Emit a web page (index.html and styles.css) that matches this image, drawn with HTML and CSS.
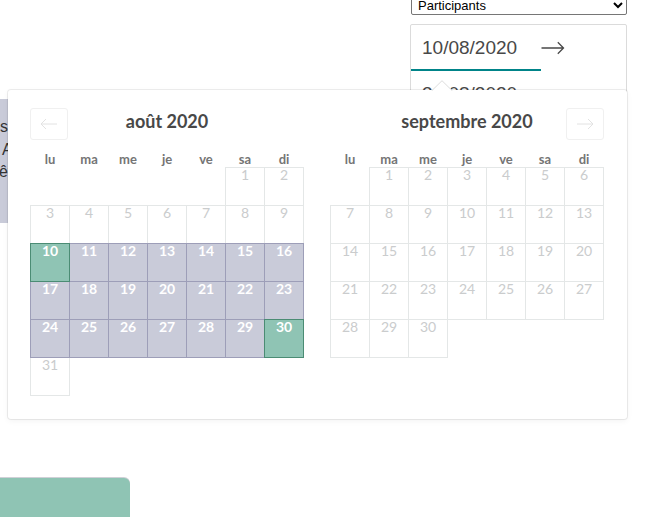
FILE: index.html
```html
<!DOCTYPE html>
<html lang="fr">
<head>
<meta charset="utf-8">
<title>Dates</title>
<link rel="stylesheet" href="styles.css">
</head>
<body>
<div class="page">
  <div class="left">
    <div class="panel">
      <div class="pl l1">s</div>
      <div class="pl l2">A</div>
      <div class="pl l3">êt</div>
    </div>
    <div class="cta"></div>
  </div>
  <div class="right">
    <select class="participants"><option>Participants</option></select>
    <div class="dates">
      <div class="date-input active">10/08/2020</div>
      <svg class="range-arrow" width="24" height="24" viewBox="0 0 24 24"><path d="M0.5 12H22.5M16.8 6.3L22.5 12L16.8 17.7" fill="none" stroke="#484848" stroke-width="1.3"/></svg>
      <div class="date-input">30/08/2020</div>
    </div>
  </div>

  <svg class="fang" width="22" height="11" viewBox="0 0 22 11"><path d="M0 11L11 0.5L22 11Z" fill="#fff"/><path d="M0.5 11L11 0.7L21.5 11" fill="none" stroke="#dcdcdc" stroke-width="1"/></svg>

  <div class="picker">
    <div class="month">
      <div class="month-head">
        <div class="nav"><svg width="18" height="12" viewBox="0 0 18 12"><path d="M1 6H17M6 1L1 6L6 11" fill="none" stroke="#e2e2e2" stroke-width="1"/></svg></div>
        <div class="title">août 2020</div>
        <div></div>
      </div>
      <div class="weekdays"><span>lu</span><span>ma</span><span>me</span><span>je</span><span>ve</span><span>sa</span><span>di</span></div>
      <div class="days">
        <div></div><div></div><div></div><div></div><div></div>
        <div class="d">1</div><div class="d">2</div>
        <div class="d">3</div><div class="d">4</div><div class="d">5</div><div class="d">6</div><div class="d">7</div><div class="d">8</div><div class="d">9</div>
        <div class="d sel">10</div><div class="d rng">11</div><div class="d rng">12</div><div class="d rng">13</div><div class="d rng">14</div><div class="d rng">15</div><div class="d rng">16</div>
        <div class="d rng">17</div><div class="d rng">18</div><div class="d rng">19</div><div class="d rng">20</div><div class="d rng">21</div><div class="d rng">22</div><div class="d rng">23</div>
        <div class="d rng">24</div><div class="d rng">25</div><div class="d rng">26</div><div class="d rng">27</div><div class="d rng">28</div><div class="d rng">29</div><div class="d sel">30</div>
        <div class="d">31</div>
      </div>
    </div>
    <div class="month">
      <div class="month-head">
        <div></div>
        <div class="title">septembre 2020</div>
        <div class="nav"><svg width="18" height="12" viewBox="0 0 18 12"><path d="M1 6H17M12 1L17 6L12 11" fill="none" stroke="#e2e2e2" stroke-width="1"/></svg></div>
      </div>
      <div class="weekdays"><span>lu</span><span>ma</span><span>me</span><span>je</span><span>ve</span><span>sa</span><span>di</span></div>
      <div class="days">
        <div></div>
        <div class="d">1</div><div class="d">2</div><div class="d">3</div><div class="d">4</div><div class="d">5</div><div class="d">6</div>
        <div class="d">7</div><div class="d">8</div><div class="d">9</div><div class="d">10</div><div class="d">11</div><div class="d">12</div><div class="d">13</div>
        <div class="d">14</div><div class="d">15</div><div class="d">16</div><div class="d">17</div><div class="d">18</div><div class="d">19</div><div class="d">20</div>
        <div class="d">21</div><div class="d">22</div><div class="d">23</div><div class="d">24</div><div class="d">25</div><div class="d">26</div><div class="d">27</div>
        <div class="d">28</div><div class="d">29</div><div class="d">30</div>
      </div>
    </div>
  </div>
</div>
</body>
</html>
```

FILE: styles.css
```css
* { box-sizing: border-box; }
html, body { margin: 0; padding: 0; background: #fff; }
body { width: 646px; height: 517px; overflow: hidden; font-family: "Lato", "Liberation Sans", sans-serif; }

.page {
  position: relative;
  display: grid;
  grid-template-columns: 410px 217px;
  width: 646px;
  height: 517px;
}

.left { display: flex; flex-direction: column; overflow: hidden; }
.panel {
  margin-top: 99px;
  height: 127px;
  width: 200px;
  background: #c9cbd9;
  padding-top: 17px;
  font-family: "Liberation Sans", sans-serif;
  font-size: 16px;
  line-height: 22.5px;
  color: #333;
}
.l1 { margin-left: 0; }
.l2 { margin-left: 2px; }
.l3 { margin-left: -1px; }

.cta {
  margin-top: 255px;
  width: 130px;
  height: 40px;
  background: #8fc4b4;
  border-top-right-radius: 6px;
  box-shadow: 0 -1px 0 rgba(120,120,140,0.35);
}

.right { display: flex; flex-direction: column; }
.participants {
  margin: -4px 0 0 1px;
  width: 216px;
  height: 19px;
  font-family: "Liberation Sans", sans-serif;
  font-size: 13px;
  color: #000;
  background: #fff;
  border: 1px solid #767676;
  border-radius: 2px;
  padding: 0 2px;
}
.dates {
  margin-top: 9px;
  width: 217px;
  border: 1px solid #dbdbdb;
  border-radius: 2px;
  display: flex;
  flex-wrap: wrap;
  align-items: center;
  background: #fff;
}
.date-input {
  width: 130px;
  height: 46px;
  padding: 11px 11px 9px;
  font-family: "Liberation Sans", sans-serif;
  font-size: 19px;
  line-height: 24px;
  color: #484848;
  border-bottom: 2px solid transparent;
}
.date-input.active { border-bottom-color: #008489; }
.range-arrow { display: block; margin-left: 0; }

.fang { position: absolute; left: 431px; top: 80px; z-index: 3; display: block; }

.picker {
  position: absolute;
  left: 8px;
  top: 90px;
  width: 619px;
  height: 329px;
  background: #fff;
  border-radius: 3px;
  box-shadow: 0 2px 6px rgba(0,0,0,0.05), 0 0 0 1px rgba(0,0,0,0.07);
  padding: 18px 0 0 22px;
  display: flex;
  gap: 26px;
  z-index: 2;
}
.month { width: 274px; }
.month-head {
  display: grid;
  grid-template-columns: 38px 1fr 38px;
  height: 32px;
}
.nav {
  width: 38px;
  height: 32px;
  border: 1px solid #f0f0f0;
  border-radius: 3px;
  display: flex;
  align-items: center;
  justify-content: center;
}
.nav svg { display: block; }
.title {
  text-align: center;
  font-size: 18px;
  font-weight: 700;
  color: #484848;
  line-height: 26px;
}
.weekdays {
  display: grid;
  grid-template-columns: repeat(7, 39px);
  margin-top: 12px;
  height: 15px;
  line-height: 15px;
  font-size: 13px;
  font-weight: 700;
  color: #757575;
}
.weekdays span { text-align: center; padding-left: 1px; }
.days {
  display: grid;
  grid-template-columns: repeat(7, 39px);
  grid-auto-rows: 38px;
}
.d {
  width: 40px;
  height: 39px;
  border: 1px solid #e4e7e7;
  text-align: center;
  font-size: 14px;
  line-height: 14px;
  color: #cacccd;
  background: #fff;
}
.d.rng {
  position: relative;
  z-index: 1;
  background: #c9cbd9;
  border-color: #9d9eb8;
  color: #fff;
  font-weight: 700;
}
.d.sel {
  position: relative;
  z-index: 2;
  background: #8fc4b4;
  border-color: #4b8c74;
  color: #fff;
  font-weight: 700;
}
```
